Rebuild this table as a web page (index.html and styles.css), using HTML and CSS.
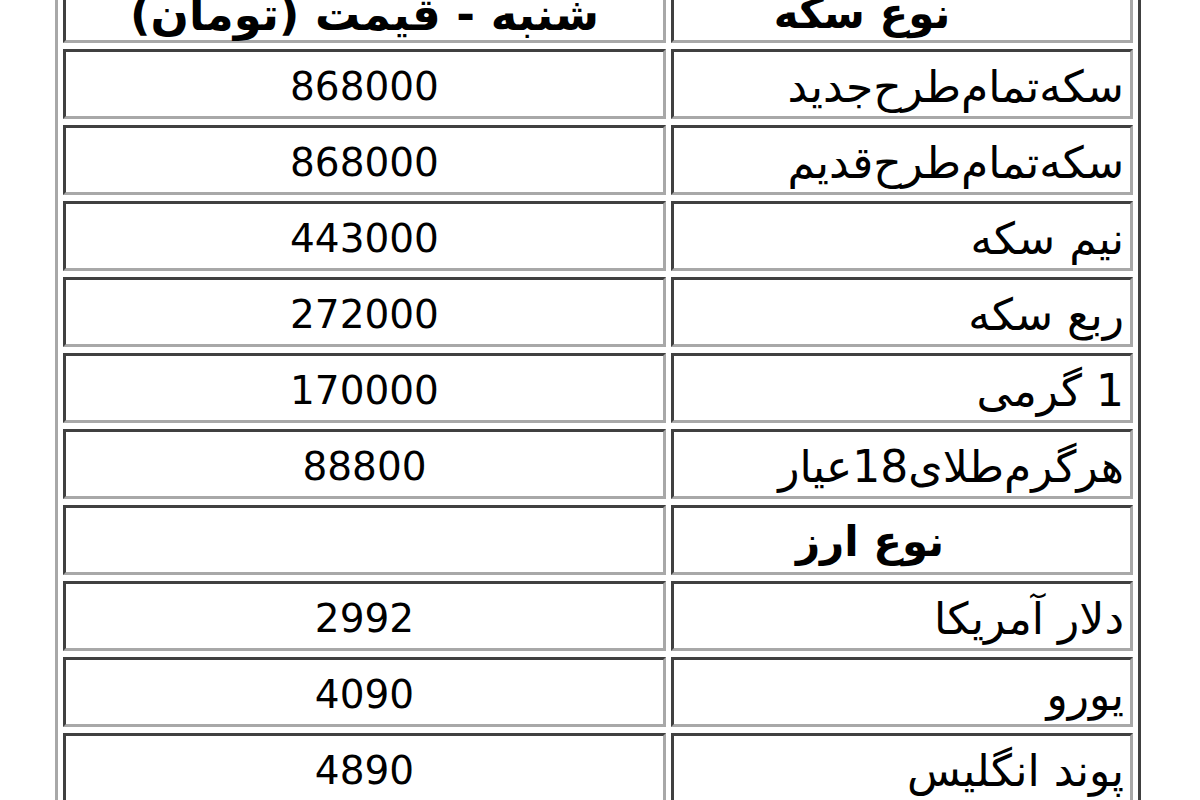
FILE: index.html
```html
<!DOCTYPE html>
<html lang="fa">
<head>
<meta charset="utf-8">
<title>قیمت سکه و ارز</title>
<link rel="stylesheet" href="styles.css">
</head>
<body>
<table class="prices" dir="rtl">
  <colgroup>
    <col class="col-name">
    <col class="col-price">
  </colgroup>
  <tr>
    <th class="head-name">نوع سکه</th>
    <th class="head-price">شنبه - قیمت (تومان)</th>
  </tr>
  <tr><td class="name">سکه‌تمام‌طرح‌جدید</td><td class="price">868000</td></tr>
  <tr><td class="name">سکه‌تمام‌طرح‌قدیم</td><td class="price">868000</td></tr>
  <tr><td class="name">نیم سکه</td><td class="price">443000</td></tr>
  <tr><td class="name">ربع سکه</td><td class="price">272000</td></tr>
  <tr><td class="name">1 گرمی</td><td class="price">170000</td></tr>
  <tr><td class="name">هرگرم‌طلای18عیار</td><td class="price">88800</td></tr>
  <tr><th class="head-name sub">نوع ارز</th><td class="price"></td></tr>
  <tr><td class="name">دلار آمریکا</td><td class="price">2992</td></tr>
  <tr><td class="name">یورو</td><td class="price">4090</td></tr>
  <tr><td class="name">پوند انگلیس</td><td class="price">4890</td></tr>
</table>
</body>
</html>
```

FILE: styles.css
```css
html, body {
  margin: 0;
  padding: 0;
  background: #ffffff;
  overflow: hidden;
}

.prices {
  margin-left: 55px;
  margin-top: -36px;
  width: 1086px;
  table-layout: fixed;
  border-collapse: separate;
  border-spacing: 5px 6px;
  border-style: solid;
  border-width: 3px;
  border-color: #a8a8a8 #404040 #404040 #a8a8a8;
  font-family: "DejaVu Sans", Tahoma, sans-serif;
  font-size: 39px;
  color: #000000;
}

.col-name {
  width: 462px;
}

.col-price {
  width: 603px;
}

.prices th,
.prices td {
  padding: 0 6px;
  border-style: solid;
  border-width: 3px;
  border-color: #404040 #a8a8a8 #a8a8a8 #404040;
  vertical-align: middle;
  white-space: nowrap;
  line-height: 1;
}

.prices th {
  font-weight: bold;
  text-align: center;
  font-size: 42px;
  padding-top: 12px;
  height: 52px;
}

.prices .head-name {
  padding-right: 86px;
}

.prices .head-price {
  font-size: 45px;
}

.prices .sub {
  padding-top: 4px;
  height: 60px;
  padding-right: 70px;
}

.prices .name {
  text-align: right;
  font-size: 44px;
  padding-top: 6px;
  height: 58px;
}

.prices .price {
  text-align: center;
  padding-top: 4px;
  height: 60px;
}
```
